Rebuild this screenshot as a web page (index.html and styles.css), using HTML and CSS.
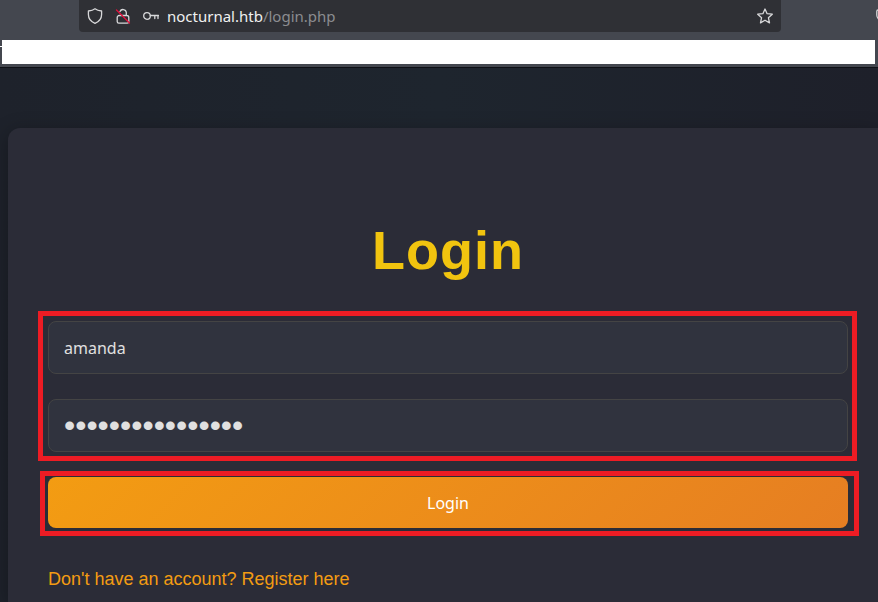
FILE: index.html
```
<!DOCTYPE html>
<html lang="en">
<head>
  <meta charset="UTF-8">
  <meta name="viewport" content="width=device-width, initial-scale=1.0">
  <title>Login</title>
  <link rel="stylesheet" href="styles.css">
</head>
<body>

  <!-- Browser toolbar -->
  <header class="browser">
    <div class="toolbar">
      <div class="urlbar">
        <div class="identity">
          <svg class="icon" viewBox="0 0 16 16"><path d="M8 .8C6.300 2.200 4 2.800 1.400 3v3.500c0 4 2.600 7.200 6.600 8.800 4-1.600 6.600-4.800 6.600-8.800V3C12 2.800 9.700 2.200 8 .8z"/></svg>
          <svg class="icon" viewBox="0 0 16 16">
            <path d="M5 3.500a3.300 3.300 0 0 1 6.300 1V7.500M5.500 7.500h6.300a2 2 0 0 1 2 2v4.100a1.600 1.600 0 0 1-1.600 1.600H3.800a1.600 1.600 0 0 1-1.600-1.600V9.500a2 2 0 0 1 2-2z"/>
            <path class="strike" d="M1.500 2l13 13"/>
          </svg>
          <svg class="icon" viewBox="0 0 16 16"><circle cx="4" cy="8" r="3.300"/><path d="M7.300 7.500H15.500M11.800 7.500v3M15 7.500v3"/></svg>
        </div>
        <div class="url">nocturnal.htb<span class="path">/login.php</span></div>
        <svg class="icon" viewBox="0 0 16 16"><path d="M8 1l2.100 4.700 5.200.5-3.900 3.500 1.100 5.200L8 12.200l-4.500 2.700 1.100-5.200L.7 6.200l5.200-.5z"/></svg>
      </div>
      <svg class="icon extension" viewBox="0 0 16 16"><path d="M2.500 2H14v6c0 4-3 6-6 6.500C4 13 .8 11 .8 7V3.500A1.500 1.500 0 0 1 2.300 2z"/></svg>
    </div>
    <div class="bookmarks"></div>
  </header>

  <main class="page">
    <div class="container">
      <h1>Login</h1>
      <form>
        <div class="highlight fields">
          <input type="text" name="username" aria-label="Username" value="amanda">
          <input type="password" name="password" aria-label="Password" value="abcdefghijklmnop">
        </div>
        <div class="highlight submit">
          <button type="submit">Login</button>
        </div>
      </form>
      <a class="register" href="register.php">Don't have an account? Register here</a>
    </div>
  </main>

</body>
</html>
```
FILE: styles.css
```
* {
  box-sizing: border-box;
  margin: 0;
  padding: 0;
}

body {
  min-height: 100vh;
  display: flex;
  flex-direction: column;
  overflow: hidden;
  font-family: "Liberation Sans", Arial, sans-serif;
  font-size: 18px;
  color: #e0e0e0;
  background: #1e222c;
}

/* Browser toolbar */
.browser {
  background: #44474f;
  border-bottom: 1px solid #0e1015;
  padding-bottom: 3px;
}

.toolbar {
  display: flex;
  align-items: center;
  padding-left: 79px;
  margin-bottom: 8px;
}

.urlbar {
  flex: 1;
  display: flex;
  align-items: center;
  gap: 8px;
  height: 32px;
  padding: 0 8px;
  background: #2f3035;
  border-radius: 0 0 4px 4px;
}

.identity {
  display: flex;
  gap: 12px;
}

.icon {
  flex: none;
  width: 16px;
  height: 16px;
  fill: none;
  stroke: #d8d8da;
  stroke-width: 1.3;
  stroke-linejoin: round;
  stroke-linecap: round;
}

.icon .strike {
  stroke: #e2103c;
}

.extension {
  margin-left: 95px;
  margin-right: -14px;
}

.url {
  flex: 1;
  font-family: "Noto Sans", sans-serif;
  font-size: 15px;
  color: #f0f0f0;
}

.url .path {
  color: #8b8c90;
}

.bookmarks {
  position: relative;
  height: 24px;
  margin: 0 3px 0 2px;
  background: #fff;
}

.bookmarks::before {
  content: "";
  position: absolute;
  top: 6px;
  left: -2px;
  width: 2px;
  height: 1px;
  background: #fff;
}

/* Login page */
.page {
  flex: 1;
  display: flex;
  padding: 60px 0 0 8px;
  background: linear-gradient(to right, #1e222b, #1e252e 50%, #1e202a);
}

.container {
  flex: 1;
  padding: 91px 20px 12px 30px;
  background: #2b2c37;
  border-radius: 12px 0 0 0;
  box-shadow: 0 4px 20px rgba(0, 0, 0, 0.3);
}

h1 {
  margin-bottom: 29px;
  font-size: 54px;
  line-height: 63px;
  letter-spacing: 1px;
  text-align: center;
  color: #f1c40f;
}

.highlight {
  border: 5px solid #ed1c24;
}

.fields {
  display: flex;
  flex-direction: column;
  gap: 25px;
  margin-right: 1px;
  padding: 5px 4px 4px 5px;
}

.submit {
  margin: 10px -1px 0 2px;
  padding: 1px 6px 3px 3px;
}

input,
button {
  width: 100%;
  font-family: "Noto Sans", sans-serif;
  font-size: 16px;
  border-radius: 8px;
}

input {
  height: 53px;
  padding: 0 15px;
  color: #e0e0e0;
  background: #30333e;
  border: 1px solid #444;
}

input[type="password"] {
  font-family: "Liberation Sans", sans-serif;
  font-size: 32px;
}

button {
  display: block;
  height: 51px;
  color: #fff;
  background: linear-gradient(135deg, #f39c12, #e67e22);
  border: none;
  cursor: pointer;
}

.register {
  display: block;
  margin: 32px 10px 0;
  line-height: 22px;
  color: #f39c12;
  text-decoration: none;
}
```
